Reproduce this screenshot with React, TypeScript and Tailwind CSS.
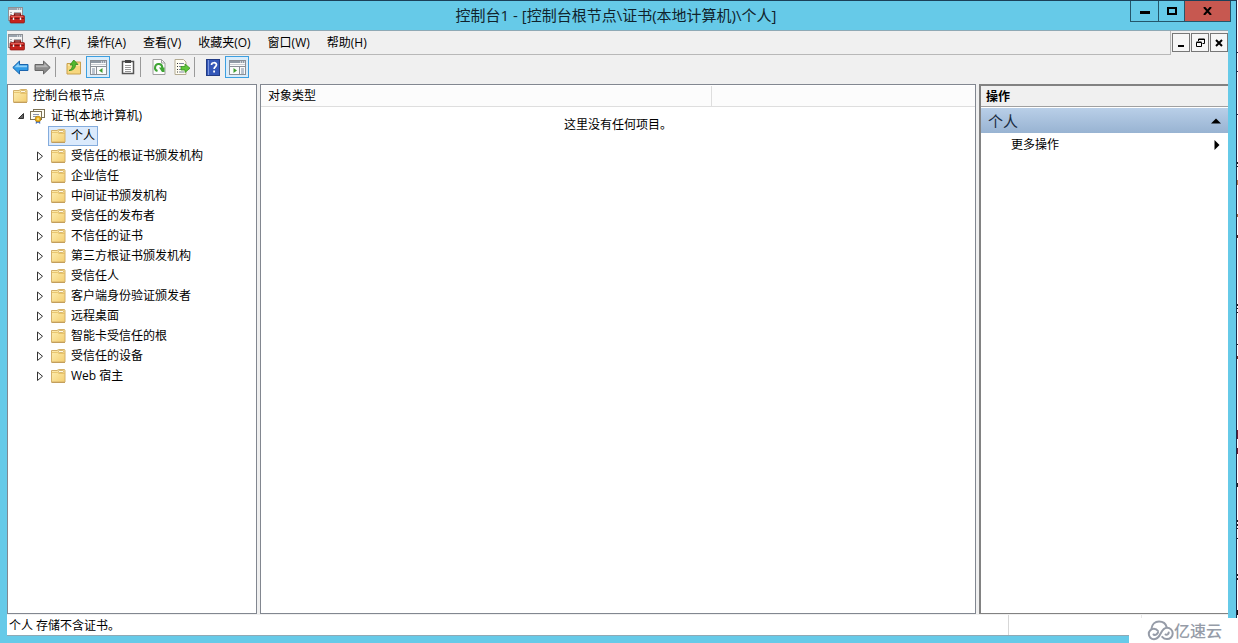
import React, { useState } from 'react';
import clsx from 'clsx';

const menus = ['文件(F)', '操作(A)', '查看(V)', '收藏夹(O)', '窗口(W)', '帮助(H)'];

const stores = [
  '个人',
  '受信任的根证书颁发机构',
  '企业信任',
  '中间证书颁发机构',
  '受信任的发布者',
  '不信任的证书',
  '第三方根证书颁发机构',
  '受信任人',
  '客户端身份验证颁发者',
  '远程桌面',
  '智能卡受信任的根',
  '受信任的设备',
  'Web 宿主',
];

// what shows of the window behind, right of the frame
const behind = [
  { y: 52, h: 1, fill: '#26324a' },
  { y: 71, h: 1, fill: '#26324a' },
  { y: 114, h: 1, fill: '#26324a' },
  { y: 162, h: 2, fill: '#222' },
  { y: 166, h: 1, fill: '#222' },
  { y: 180, h: 5, fill: '#b07a4a' },
  { y: 214, h: 3, fill: '#a3673b' },
  { y: 235, h: 3, fill: '#54251d' },
  { y: 304, h: 2, fill: '#222' },
  { y: 308, h: 1, fill: '#222' },
  { y: 312, h: 1, fill: '#222' },
  { y: 344, h: 1, fill: '#222' },
  { y: 356, h: 3, fill: '#7a3228' },
  { y: 430, h: 9, fill: '#6b1f35' },
  { y: 448, h: 6, fill: '#6b1f35' },
  { y: 483, h: 4, fill: '#222' },
  { y: 520, h: 2, fill: '#222' },
  { y: 524, h: 2, fill: '#222' },
  { y: 528, h: 1, fill: '#222' },
  { y: 538, h: 1, fill: '#222' },
  { y: 574, h: 2, fill: '#222' },
  { y: 578, h: 2, fill: '#222' },
  { y: 610, h: 5, fill: '#111' },
];

const ConsoleIcon = () => (
  <svg width="17" height="17" viewBox="0 0 17 17" className="shrink-0">
    <rect x=".5" y=".5" width="14" height="13" fill="#f5f5f5" stroke="#8c8f94" />
    <path d="M1 2h13" stroke="#9aa4ae" strokeWidth="2" />
    <path d="M9 2h1M11 2h1M13 2h1" stroke="#fff" />
    <path d="M2 5.500h2M6 5.500h7M2 7.500h2M2 9.500h1" stroke="#a9adb2" />
    <path d="M6.500 9V7h6v2" fill="none" stroke="#7d1512" strokeWidth="1.300" />
    <rect x="2" y="8.500" width="14.500" height="7.500" rx="1" fill="#c5241e" stroke="#8e1713" strokeWidth=".7" />
    <path d="M2.500 11.500h13.500" stroke="#7d1512" />
    <path d="M5.500 10.500v2.500M12.500 10.500v2.500" stroke="#eee" strokeWidth="1.400" />
    <path d="M3 9.500h12" stroke="#e8655b" strokeWidth=".9" />
  </svg>
);

const FolderIcon = () => (
  <svg width="15" height="14" viewBox="0 0 15 14" className="shrink-0">
    <defs>
      <linearGradient id="folder" x1="0" y1="0" x2="1" y2="1">
        <stop offset="0" stopColor="#fdefb5" />
        <stop offset="1" stopColor="#f4ce70" />
      </linearGradient>
    </defs>
    <path d="M.5 1.500H6l1.500-1h6l.5 1v11.500H.5z" fill="url(#folder)" stroke="#d3b06a" />
    <path d="M1 3.500h5.500l1.500 1H14" fill="none" stroke="#e3bd62" strokeWidth=".8" />
    <rect x="7.500" y="1.500" width="5" height="2" rx="1" fill="#fffbe9" stroke="#cfa95a" strokeWidth=".8" />
    <path d="M.5 13.500H14" stroke="#b98f45" strokeWidth=".8" />
  </svg>
);

const CertIcon = () => (
  <svg width="16" height="16" viewBox="0 0 16 16" className="shrink-0">
    <rect x="3.500" y="1.500" width="11" height="8" fill="#fffdf3" stroke="#7d7256" />
    <rect x=".5" y="3.500" width="11" height="8" fill="#fffdf3" stroke="#7d7256" />
    <path d="M3 6.500h6M3 8.500h4" stroke="#8a94ae" />
    <path d="M5.800 12v4l2.200-1.500 2.200 1.500v-4z" fill="#3f6fc4" />
    <circle cx="8" cy="11" r="2.800" fill="#f0b51e" stroke="#b27d0a" strokeWidth=".8" />
    <circle cx="8" cy="11" r="1" fill="#fde48a" />
  </svg>
);

const ArrowIcon = ({ back }: { back?: boolean }) => (
  <svg width="17" height="15" viewBox="0 0 17 15">
    {back ? (
      <>
        <path d="M.8 7.500L7.500 1v3.500h8.500v6H7.500V14z" fill="#2f9be6" stroke="#1a64ad" strokeLinejoin="round" />
        <path d="M2.500 7.200L6.700 3.200v2.300H15v1.700z" fill="#8fd0f7" />
      </>
    ) : (
      <>
        <path d="M16.200 7.500L9.500 1v3.500H1v6h8.500V14z" fill="#8b8b8b" stroke="#666" strokeLinejoin="round" />
        <path d="M14.500 7.200l-4.200-4v2.300H2v1.700z" fill="#b5b5b5" />
      </>
    )}
  </svg>
);

const UpFolderIcon = () => (
  <svg width="16" height="16" viewBox="0 0 16 16">
    <path d="M1 4.500h7l1-1.500h5.500v12H1z" fill="#f7d77f" stroke="#c9a04c" />
    <path d="M2 6h12" stroke="#fff3c4" />
    <path d="M3 11.500c2.500-1 3.500-3 3.500-5.500H4L7.800 1 12 5.500H9.500C9.500 9 7.500 11.500 3 11.500z" fill="#52b82f" stroke="#2f8a1c" strokeWidth=".8" />
  </svg>
);

const PaneIcon = ({ right }: { right?: boolean }) => (
  <svg width="17" height="15" viewBox="0 0 17 15">
    <rect x=".5" y=".5" width="16" height="14" fill="#fbfbfb" stroke="#8a8f96" />
    <path d="M1 2h15" stroke="#909aa5" strokeWidth="2" />
    <path d="M11 2h1M13 2h1M15 2h1" stroke="#fff" />
    <path d="M1 4.500h15" stroke="#c9cdd2" />
    <path d="M1 6.500h15" stroke="#8a8f96" />
    {right ? (
      <>
        <path d="M10.500 6.500v8" stroke="#8a8f96" />
        <path d="M12 9h3M12 11h3M12 13h3" stroke="#7d8ca0" />
        <path d="M4.500 8v5l3.500-2.500z" fill="#3f9e2f" />
      </>
    ) : (
      <>
        <path d="M6.500 6.500v8" stroke="#8a8f96" />
        <path d="M2 9h3M2 11h3M2 13h3" stroke="#7d8ca0" />
        <path d="M12.500 8v5L9 10.500z" fill="#3f9e2f" />
      </>
    )}
  </svg>
);

const ClipboardIcon = () => (
  <svg width="14" height="16" viewBox="0 0 14 16">
    <rect x="1.500" y="2.500" width="11" height="12" fill="#fff" stroke="#555" strokeWidth="1.500" />
    <rect x="4" y="1" width="6" height="3" fill="#444" />
    <path d="M4 6.500h6M4 8.500h6M4 10.500h6M4 12.500h6" stroke="#999" />
  </svg>
);

const RefreshIcon = () => (
  <svg width="14" height="16" viewBox="0 0 14 16">
    <path d="M1 .5h8.500l3.500 3.500v11.500H1z" fill="#fdfdfd" stroke="#a0a0a0" />
    <path d="M9.500.5v3.500H13" fill="none" stroke="#a0a0a0" />
    <path d="M5.500 12a3.600 3.600 0 1 1 4.700-3" fill="none" stroke="#3fa535" strokeWidth="2" />
    <path d="M7 8.500h5.500v4.500H10z" fill="#3fa535" />
  </svg>
);

const ExportIcon = () => (
  <svg width="17" height="16" viewBox="0 0 17 16">
    <path d="M1 .5h8.500l2.500 2.500v12.500H1z" fill="#fffdf2" stroke="#b3ab92" />
    <path d="M3 4.500h1M3 7.500h1M3 10.500h1M3 13h1" stroke="#333" />
    <path d="M5 4.500h5M5 7.500h3M5 10.500h3M5 13h5" stroke="#7f87a0" />
    <path d="M7 7.500h4V5l5 4.200-5 4.300V11H7z" fill="#5fc63a" stroke="#36931f" strokeWidth=".8" />
  </svg>
);

const HelpIcon = () => (
  <svg width="14" height="17" viewBox="0 0 14 17">
    <rect x=".5" y=".5" width="13" height="16" fill="#3457b8" stroke="#223c86" />
    <path d="M2.500 1v15" stroke="#7c97dd" />
    <path d="M5.500 6c0-3 5-3 5-.2 0 2-2.400 1.900-2.400 4.200" fill="none" stroke="#fff" strokeWidth="1.700" />
    <path d="M7.200 11.500H9v2H7.200z" fill="#fff" />
  </svg>
);

const CloudLogo = () => (
  <svg width="27" height="21" viewBox="0 0 27 21" fill="none" stroke="#969ca8" strokeWidth="2" strokeLinecap="round">
    <path d="M4.500 8.500C5 4.500 8 1.500 12 1.500c4 0 6.800 2.300 7.600 5.500" />
    <path d="M11 11C9.800 9.300 8.500 8.800 7 8.800a5.200 5.200 0 1 0 0 10.400c3.800 0 5.300-2.800 6.800-5.900s3-5.600 6.200-5.600a5.700 5.700 0 0 1 0 11.400c-2 0-3.600-.8-4.800-2.200" />
    <path d="M6.500 14.500c2 1 3.500 0 4.500-2M18.500 14.500c2 .5 3-.5 3.200-2" />
  </svg>
);

const Separator = () => <span className="h-5 w-px bg-[#9a9a9a]" />;

const ToolButton = ({ label, active, children }: { label: string; active?: boolean; children: React.ReactNode }) => (
  <button
    type="button"
    aria-label={label}
    className={clsx(
      'flex h-[22px] items-center justify-center border',
      active ? 'w-6 border-[#3c9fe0] bg-[#d9ecfa]' : 'w-[22px] border-transparent'
    )}
  >
    {children}
  </button>
);

const mdiButton = 'flex h-[19px] w-[18px] items-center justify-center border border-[#777] bg-[#f6f6f6]';

const App: React.FC = () => {
  const [selected, setSelected] = useState('个人');
  const [expanded, setExpanded] = useState(true);

  return (
    <div className="relative flex min-h-screen bg-white font-['Open_Sans','Noto_Sans_CJK_SC',sans-serif] text-xs leading-5 text-black">
      <div className="flex min-w-0 flex-1 flex-col border-t border-[#1b4058] bg-[#66cae8] pb-[7px]">
        <header className="flex h-[29px] items-start">
          <div className="w-[102px] pt-[6px] pl-2">
            <ConsoleIcon />
          </div>
          <h1 className="flex-1 truncate pt-[3px] text-center text-[15px] leading-[22px] text-[#10232c]">
            控制台1 - [控制台根节点\证书(本地计算机)\个人]
          </h1>
          <div className="mr-[5px] flex h-[21px] border border-t-0 border-[#24566b]">
            <button type="button" aria-label="最小化" className="flex w-7 items-center justify-center border-r border-[#24566b]">
              <svg width="10" height="10" viewBox="0 0 10 10"><path d="M0 6.500h10" stroke="#000" strokeWidth="3" /></svg>
            </button>
            <button type="button" aria-label="最大化" className="flex w-[26px] items-center justify-center border-r border-[#24566b]">
              <svg width="10" height="8" viewBox="0 0 10 8"><rect x="1" y="1" width="8" height="6" fill="none" stroke="#000" strokeWidth="2" /></svg>
            </button>
            <button type="button" aria-label="关闭" className="flex w-[45px] items-center justify-center bg-[#c75850]">
              <svg width="9" height="8" viewBox="0 0 9 8"><path d="M1 0l7 8M8 0L1 8" stroke="#000" strokeWidth="2" /></svg>
            </button>
          </div>
        </header>

        <div className="mr-2 ml-[7px] flex flex-1 flex-col border-t border-b border-[#8fa9b5] bg-[#f0f0f0]">
          <div className="flex h-6">
            <nav className="flex flex-1 items-center gap-2 border-r border-b border-[#b8b8b8] pl-px">
              <ConsoleIcon />
              <div className="flex gap-[17px]">
                {menus.map(m => (
                  <button key={m} type="button">{m}</button>
                ))}
              </div>
            </nav>
            <div className="flex gap-px pt-[2px] pl-px">
              <button type="button" aria-label="最小化子窗口" className={mdiButton}>
                <svg width="8" height="8" viewBox="0 0 8 8"><path d="M1 7h6" stroke="#000" strokeWidth="2" /></svg>
              </button>
              <button type="button" aria-label="还原子窗口" className={mdiButton}>
                <svg width="9" height="9" viewBox="0 0 9 9" fill="none" stroke="#000">
                  <path d="M2.500 3V1h6v4.500h-2M2.500 1.500h6" />
                  <path d="M.5 4.500h5v4h-5zM.5 4h5" />
                </svg>
              </button>
              <button type="button" aria-label="关闭子窗口" className={mdiButton}>
                <svg width="8" height="8" viewBox="0 0 8 8"><path d="M1 1l6 6M7 1L1 7" stroke="#000" strokeWidth="2" /></svg>
              </button>
            </div>
          </div>

          <div className="flex h-[29px] items-center gap-[7px] pb-[5px] pl-[2px]">
            <div className="flex items-center gap-0.5">
              <div className="flex">
                <ToolButton label="后退"><ArrowIcon back /></ToolButton>
                <ToolButton label="前进"><ArrowIcon /></ToolButton>
              </div>
              <Separator />
            </div>
            <div className="flex items-center gap-px">
              <ToolButton label="上一级"><UpFolderIcon /></ToolButton>
              <ToolButton label="显示/隐藏控制台树" active><PaneIcon /></ToolButton>
            </div>
            <div className="flex items-center gap-px">
              <ToolButton label="属性"><ClipboardIcon /></ToolButton>
              <Separator />
            </div>
            <div className="flex items-center gap-px">
              <ToolButton label="刷新"><RefreshIcon /></ToolButton>
              <ToolButton label="导出列表"><ExportIcon /></ToolButton>
              <Separator />
            </div>
            <div className="flex items-center gap-px">
              <ToolButton label="帮助"><HelpIcon /></ToolButton>
              <ToolButton label="显示/隐藏操作窗格" active><PaneIcon right /></ToolButton>
            </div>
          </div>

          <main className="flex flex-1 gap-[3px]">
            <aside className="w-[250px] shrink-0 border border-[#828790] bg-white pt-px">
              <div className="flex h-5 items-center gap-[5px] pl-[5px]">
                <FolderIcon />
                <button type="button">控制台根节点</button>
              </div>
              <div className="flex h-5 items-center gap-[5px] pl-[9px]">
                <button type="button" aria-label="展开或折叠" onClick={() => setExpanded(!expanded)}>
                  <svg width="8" height="8" viewBox="0 0 8 8"><path d="M6.500 1.500v5h-5z" fill="#666" stroke="#333" /></svg>
                </button>
                <CertIcon />
                <button type="button">证书(本地计算机)</button>
              </div>
              {expanded && (
                <ul>
                  {stores.map((s, i) => (
                    <li key={s} className="flex h-5 items-center pl-7">
                      <span className="flex w-3">
                        {i > 0 && (
                          <button type="button" aria-label={`展开 ${s}`}>
                            <svg width="8" height="10" viewBox="0 0 8 10"><path d="M1.500 1v8.500l5-4.250z" fill="#fff" stroke="#333" /></svg>
                          </button>
                        )}
                      </span>
                      <button
                        type="button"
                        onClick={() => setSelected(s)}
                        className={clsx(
                          'flex h-5 items-center gap-[5px] border px-[2px]',
                          selected === s ? 'border-[#84acdd] bg-[#dbeafc]' : 'border-transparent'
                        )}
                      >
                        <FolderIcon />
                        {s}
                      </button>
                    </li>
                  ))}
                </ul>
              )}
            </aside>

            <section className="min-w-0 flex-1 border border-[#828790] bg-white pt-px">
              <table className="w-full table-fixed border-collapse">
                <thead>
                  <tr className="border-b border-[#dedede] bg-[#fcfcfc]">
                    <th className="w-[450px] border-r border-[#dedede] pl-[7px] text-left font-normal">对象类型</th>
                    <th aria-label="空白列" />
                  </tr>
                </thead>
                <tbody>
                  <tr>
                    <td colSpan={2} className="pt-2 text-center">这里没有任何项目。</td>
                  </tr>
                </tbody>
              </table>
            </section>

            <aside className="w-[249px] shrink-0 border-t-2 border-b border-l-2 border-[#828282] bg-white">
              <h2 className="h-[21px] border-b border-[#a0a0a0] bg-[#f0f0f0] pt-px pl-[5px] leading-5 font-bold">操作</h2>
              <button
                type="button"
                className="mt-px flex h-[25px] w-full items-center justify-between bg-linear-to-b from-[#b9cfe8] to-[#98b3d2] px-[7px] text-[15px] text-[#1a2c42]"
              >
                个人
                <svg width="10" height="6" viewBox="0 0 10 6"><path d="M0 5.500L5 .5l5 5z" fill="#000" /></svg>
              </button>
              <button type="button" className="flex h-6 w-full items-center justify-between pr-2 pl-[30px]">
                更多操作
                <svg width="6" height="10" viewBox="0 0 6 10"><path d="M.5 0l5 5-5 5z" fill="#000" /></svg>
              </button>
            </aside>
          </main>

          <footer className="mt-px flex h-5 bg-white">
            <p className="flex-1 pt-px pl-[2px]">个人 存储不含证书。</p>
            <span className="w-[133px] border-l border-[#d7d7d7]" />
            <span className="w-[87px] border-l border-[#e8e8e8]" />
          </footer>
        </div>
      </div>

      <div className="w-0.5 border-l border-[#1c2b4a] bg-white">
        <svg width="1" height="643" viewBox="0 0 1 643">
          {behind.map(b => (
            <rect key={b.y} x="0" y={b.y} width="1" height={b.h} fill={b.fill} />
          ))}
        </svg>
      </div>

      <div className="absolute right-0 bottom-0 flex h-[25px] w-[109px] items-center bg-white pl-[18px] text-base leading-6 font-medium text-[#969ca8]">
        <CloudLogo />
        <span>亿速云</span>
      </div>
    </div>
  );
};

export default App;
